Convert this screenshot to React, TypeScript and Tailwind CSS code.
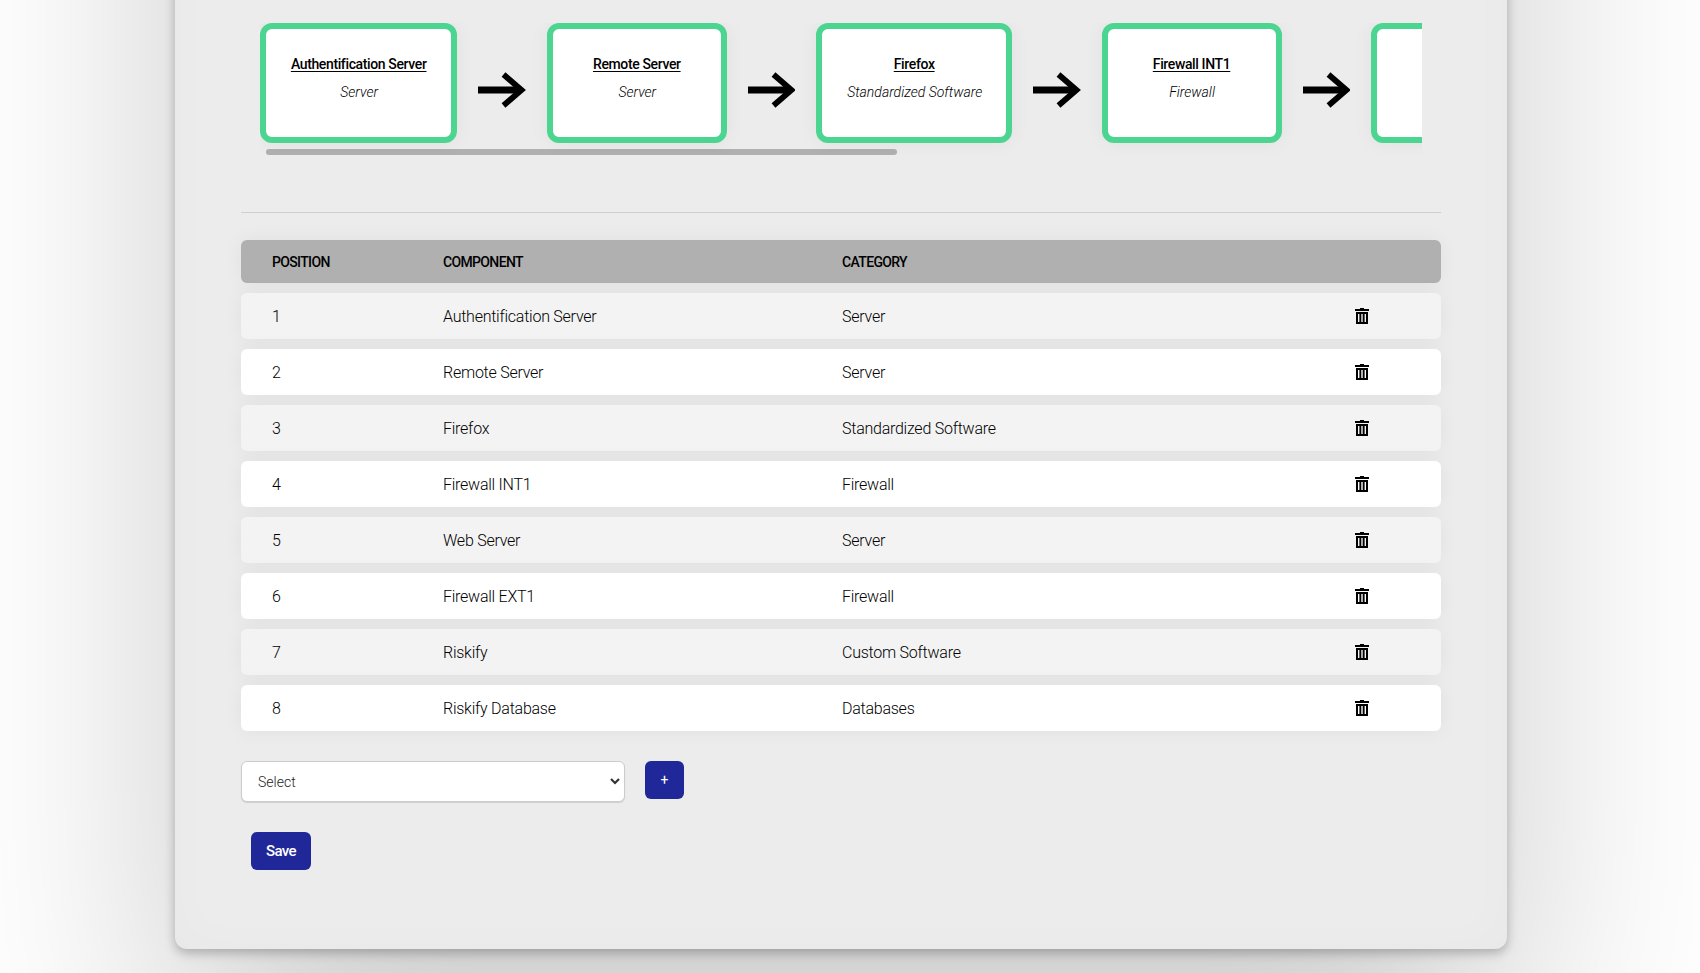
const nodes = [
  { name: "Authentification Server", category: "Server", width: "w-[197.4px]" },
  { name: "Remote Server", category: "Server", width: "w-[180px]" },
  { name: "Firefox", category: "Standardized Software", width: "w-[196px]" },
  { name: "Firewall INT1", category: "Firewall", width: "w-[180px]" },
  { name: "", category: "", width: "w-[180px]" },
];

const rows = [
  ["Authentification Server", "Server"],
  ["Remote Server", "Server"],
  ["Firefox", "Standardized Software"],
  ["Firewall INT1", "Firewall"],
  ["Web Server", "Server"],
  ["Firewall EXT1", "Firewall"],
  ["Riskify", "Custom Software"],
  ["Riskify Database", "Databases"],
];

function Arrow() {
  return (
    <svg className="mx-[21px] mt-[13px] h-9 w-[47.4px] shrink-0" viewBox="0 0 47.4 36" fill="none" stroke="#000">
      <path d="M0 18H43" strokeWidth="6.8" />
      <path d="M25.5 2.5L43.5 18L25.5 33.5" strokeWidth="5.8" />
    </svg>
  );
}

function Trash() {
  return (
    <svg className="h-4 w-3.5" viewBox="0 0 14 16" aria-label="Delete">
      <path d="M5 0h4v1h5v2H0V1h5z" />
      <path fillRule="evenodd" d="M1 4h12v12H1zM3 6v8h1.4V6zM6.3 6v8h1.4V6zM9.6 6v8h1.4V6z" />
    </svg>
  );
}

const shadow = "shadow-[0_0_20px_rgba(0,0,0,0.05)]";
const columns = "grid grid-cols-[171px_399px_513px_1fr] items-center rounded-md pl-[31px]";

export default function App() {
  return (
    <div className="h-[973px] w-[1700px] overflow-hidden bg-white font-['Roboto',sans-serif] text-black">
      <div className="ml-[175px] -mt-[400px] h-[1349px] w-[1332px] rounded-xl bg-[#ececec] px-[66px] pt-[423px] shadow-[inset_0_0_50px_rgba(0,0,0,0.02),0_4px_11px_rgba(0,0,0,0.26),0_120px_250px_rgba(0,0,0,0.21)]">
        <div className="ml-[19px] w-[1162px] overflow-hidden">
          <div className="flex w-max items-center">
            {nodes.map((n, i) => (
              <div key={i} className="flex items-center">
                {i > 0 && <Arrow />}
                <div
                  className={`h-[120px] rounded-xl border-6 border-[#4cd590] bg-white pt-[25px] text-center text-sm ${shadow} ${n.width}`}
                >
                  <div className="h-7 font-medium leading-5 tracking-[-0.37px] underline underline-offset-2">{n.name}</div>
                  <div className="pl-px font-light italic leading-5">{n.category}</div>
                </div>
              </div>
            ))}
          </div>
          <div className="ml-1.5 mt-1.5 h-1.5 w-[631px] rounded-full bg-[#b0b0b0]" />
        </div>

        <hr className="mt-[57px] border-[#cfcfcf]" />

        <div className="mt-[27px] flex flex-col gap-2.5">
          <div className={`${columns} ${shadow} h-[43px] bg-[#b0b0b0] text-sm font-medium tracking-[-0.65px]`}>
            <span>POSITION</span>
            <span>COMPONENT</span>
            <span>CATEGORY</span>
          </div>
          {rows.map(([component, category], i) => (
            <div
              key={component}
              className={`${columns} ${shadow} h-[46px] font-light tracking-[-0.25px] ${i % 2 ? "bg-white" : "bg-[#f3f3f3]"}`}
            >
              <span className="pt-0.5">{i + 1}</span>
              <span className="pt-0.5">{component}</span>
              <span className="pt-0.5">{category}</span>
              <Trash />
            </div>
          ))}
        </div>

        <div className="mt-[30px] flex items-start gap-5">
          <div className="flex h-[41px] w-96 items-center justify-between rounded-md border border-[#cccccc] bg-white pl-4 pr-1 text-sm font-light text-[#222] shadow-[0_1px_1px_rgba(0,0,0,0.12)]">
            <span>Select</span>
            <svg className="mb-0.5 h-2.5 w-2.5" viewBox="0 0 10 10" fill="none" stroke="#333" strokeWidth="2.2">
              <path d="M1 3L5 7L9 3" />
            </svg>
          </div>
          <button className="h-[38px] w-[39px] rounded-md bg-[#1f2799] text-sm text-white">+</button>
        </div>
        <button className="ml-2.5 mt-[30px] h-[38px] w-[60px] rounded-md bg-[#1f2799] text-[15px] font-medium tracking-[-0.6px] text-white">
          Save
        </button>
      </div>
    </div>
  );
}
